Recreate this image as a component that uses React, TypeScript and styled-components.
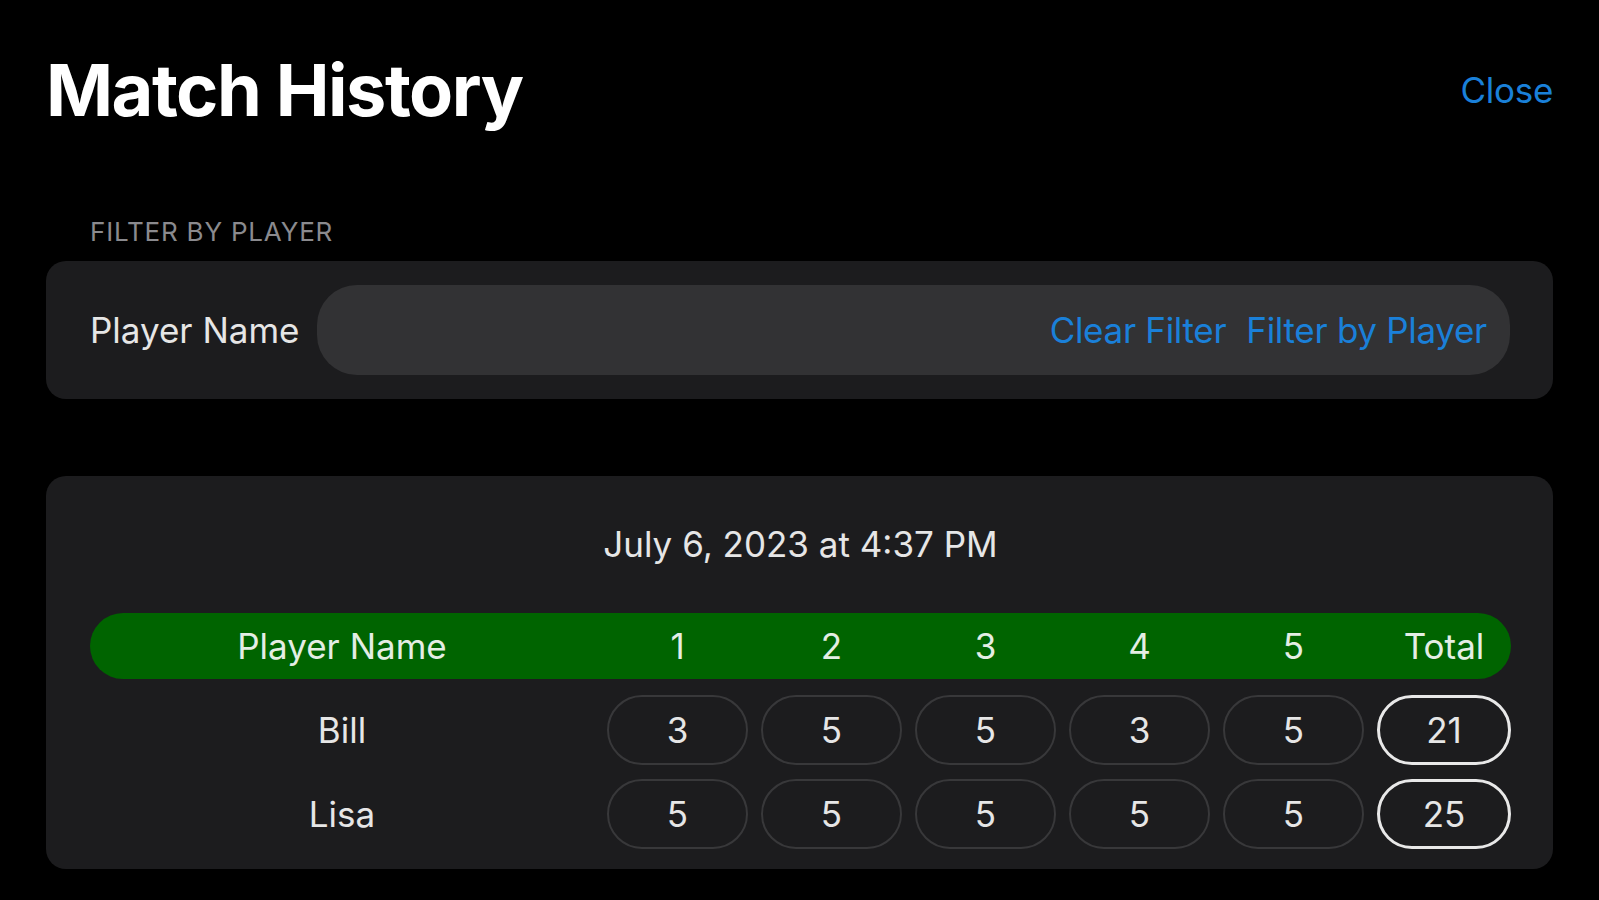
import React from 'react';
import styled, { createGlobalStyle } from 'styled-components';

type Score = { player: string; rounds: number[] };

const matches: { date: string; scores: Score[] }[] = [
  {
    date: 'July 6, 2023 at 4:37 PM',
    scores: [
      { player: 'Bill', rounds: [3, 5, 5, 3, 5] },
      { player: 'Lisa', rounds: [5, 5, 5, 5, 5] },
    ],
  },
];

const App = () => {
  return (
    <>
      <GlobalStyle />
      <Page>
        <Header>
          <Title>Match History</Title>
          <LinkButton $top={19}>Close</LinkButton>
        </Header>

        <SectionLabel>FILTER BY PLAYER</SectionLabel>
        <FilterCard>
          <FieldLabel>Player Name</FieldLabel>
          <InputPill>
            <TextInput aria-label="Player Name" />
            <LinkButton>Clear Filter</LinkButton>
            <LinkButton>Filter by Player</LinkButton>
          </InputPill>
        </FilterCard>

        {matches.map((match) => (
          <MatchCard key={match.date}>
            <MatchDate>{match.date}</MatchDate>
            <ScoreRow $header>
              <HeaderCell>Player Name</HeaderCell>
              {[1, 2, 3, 4, 5].map((n) => (
                <HeaderCell key={n}>{n}</HeaderCell>
              ))}
              <HeaderCell>Total</HeaderCell>
            </ScoreRow>
            {match.scores.map((s) => (
              <ScoreRow key={s.player}>
                <PlayerCell>{s.player}</PlayerCell>
                {s.rounds.map((r, i) => (
                  <ScorePill key={i}>{r}</ScorePill>
                ))}
                <ScorePill $total>{s.rounds.reduce((a, b) => a + b, 0)}</ScorePill>
              </ScoreRow>
            ))}
          </MatchCard>
        ))}
      </Page>
    </>
  );
};

export default App;

const GlobalStyle = createGlobalStyle`
  html, body {
    margin: 0;
    padding: 0;
    background: #000;
  }
  body {
    font-family: Inter, "Liberation Sans", sans-serif;
    color: #e6e6e6;
  }
`;

const Page = styled.div`
  width: 1599px;
  height: 900px;
  box-sizing: border-box;
  padding: 54px 46px 0 46px;
  background: #000;
  overflow: hidden;
`;

const Header = styled.div`
  display: flex;
  justify-content: space-between;
  align-items: flex-start;
`;

const Title = styled.h1`
  margin: 0;
  font-size: 72px;
  line-height: 1;
  font-weight: 700;
  color: #fff;
  letter-spacing: -1.5px;
`;

const LinkButton = styled.button<{ $top?: number }>`
  margin: ${(p) => p.$top || 0}px 0 0 0;
  padding: 0;
  border: none;
  background: none;
  font-family: inherit;
  font-size: 35px;
  line-height: 1;
  letter-spacing: -0.3px;
  color: #1a80d9;
  cursor: pointer;
  white-space: nowrap;
`;

const SectionLabel = styled.div`
  margin-top: 93px;
  padding-left: 44px;
  font-size: 26px;
  line-height: 1;
  letter-spacing: 0.8px;
  color: #8a8a8e;
`;

const FilterCard = styled.div`
  margin-top: 16px;
  display: flex;
  align-items: center;
  gap: 18px;
  padding: 24px 43px 24px 44px;
  background: #1c1c1e;
  border-radius: 20px;
`;

const FieldLabel = styled.div`
  font-size: 35px;
  line-height: 1;
  color: #e6e6e6;
  white-space: nowrap;
`;

const InputPill = styled.div`
  flex: 1;
  height: 90px;
  display: flex;
  align-items: center;
  gap: 20px;
  padding: 0 23px 0 30px;
  background: #323234;
  border-radius: 40px;
`;

const TextInput = styled.input`
  flex: 1;
  min-width: 0;
  border: none;
  outline: none;
  background: transparent;
  font-family: inherit;
  font-size: 35px;
  color: #fff;
`;

const MatchCard = styled.div`
  margin-top: 77px;
  padding: 51px 42px 20px 44px;
  background: #1c1c1e;
  border-radius: 20px;
`;

const MatchDate = styled.div`
  font-size: 35px;
  line-height: 1;
  text-align: center;
  color: #e6e6e6;
  margin-bottom: 51px;
`;

const ScoreRow = styled.div<{ $header?: boolean }>`
  display: grid;
  grid-template-columns: 1fr repeat(5, 141px) 134px;
  column-gap: 13px;
  align-items: center;
  height: ${(p) => (p.$header ? 66 : 70)}px;
  margin-bottom: ${(p) => (p.$header ? 16 : 14)}px;
  background: ${(p) => (p.$header ? '#006400' : 'transparent')};
  border-radius: 35px;

  &:last-child {
    margin-bottom: 0;
  }
`;

const HeaderCell = styled.div`
  font-size: 35px;
  line-height: 1;
  text-align: center;
  color: #e4eee4;
`;

const PlayerCell = styled.div`
  font-size: 35px;
  line-height: 1;
  text-align: center;
  color: #e6e6e6;
`;

const ScorePill = styled.div<{ $total?: boolean }>`
  box-sizing: border-box;
  height: 70px;
  display: flex;
  align-items: center;
  justify-content: center;
  font-size: 35px;
  color: #e6e6e6;
  border: ${(p) => (p.$total ? '3px solid #e8e8e8' : '2px solid #38383a')};
  border-radius: 35px;
`;
